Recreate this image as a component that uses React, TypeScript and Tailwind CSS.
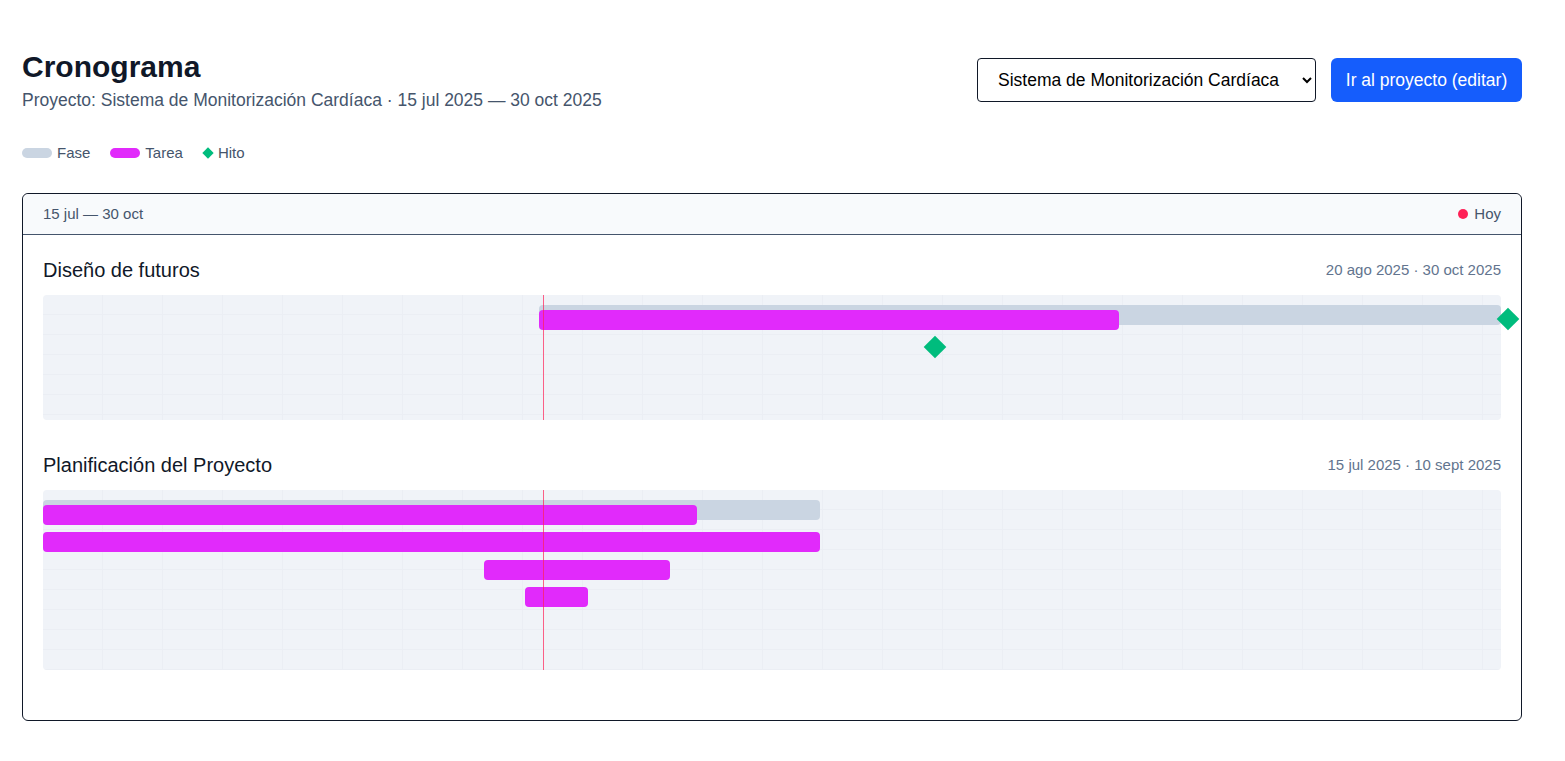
import React from "react";

type Bar = { left: number; width: number; top: number };
type Mark = { x: number; y: number };

interface Phase {
  name: string;
  range: string;
  height: number;
  phase: Bar;
  tasks: Bar[];
  milestones: Mark[];
}

// pixel positions inside a 1458px wide track (15 jul -> 30 oct)
const TODAY_X = 500;

const PHASES: Phase[] = [
  {
    name: "Diseño de futuros",
    range: "20 ago 2025 · 30 oct 2025",
    height: 125,
    phase: { left: 496, width: 962, top: 10 },
    tasks: [{ left: 496, width: 580, top: 15 }],
    milestones: [
      { x: 892, y: 52 },
      { x: 1465, y: 24 },
    ],
  },
  {
    name: "Planificación del Proyecto",
    range: "15 jul 2025 · 10 sept 2025",
    height: 180,
    phase: { left: 0, width: 777, top: 10 },
    tasks: [
      { left: 0, width: 654, top: 15 },
      { left: 0, width: 777, top: 42 },
      { left: 441, width: 186, top: 70 },
      { left: 482, width: 63, top: 97 },
    ],
    milestones: [],
  },
];

function Track({ p }: { p: Phase }) {
  return (
    <div
      className="relative rounded bg-[#f0f3f8] bg-[linear-gradient(to_left,#ebeef4_1px,transparent_1px),linear-gradient(to_top,#ebeef4_1px,transparent_1px)] bg-[size:60px_20px]"
      style={{ height: p.height }}
    >
      <div
        className="absolute h-5 rounded bg-slate-300"
        style={{ left: p.phase.left, width: p.phase.width, top: p.phase.top }}
      />
      {p.tasks.map((t, i) => (
        <div
          key={i}
          className="absolute h-5 rounded bg-fuchsia-500"
          style={{ left: t.left, width: t.width, top: t.top }}
        />
      ))}
      <div
        className="absolute top-0 bottom-0 w-px bg-rose-500/70"
        style={{ left: TODAY_X }}
      />
      {p.milestones.map((m, i) => (
        <div
          key={i}
          className="absolute h-4 w-4 rotate-45 bg-emerald-500"
          style={{ left: m.x - 8, top: m.y - 8 }}
        />
      ))}
    </div>
  );
}

export default function App() {
  return (
    <div className="min-h-screen bg-white pl-[22px] pt-[49px] font-['Liberation_Sans',Arial,sans-serif] text-gray-900">
      <div className="w-[1500px]">
        {/* header */}
        <div className="flex items-center justify-between">
          <div>
            <h1 className="text-3xl font-bold leading-9">Cronograma</h1>
            <p className="mt-0.5 text-[17.5px] leading-[26px] text-slate-600">
              Proyecto: Sistema de Monitorización Cardíaca · 15 jul 2025 — 30 oct 2025
            </p>
          </div>
          <div className="mb-0.5 flex items-center gap-[15px]">
            <select className="h-[44px] w-[339px] rounded border border-gray-900 bg-white pl-4 pr-2 text-[17.5px] text-black">
              <option>Sistema de Monitorización Cardíaca</option>
            </select>
            <button className="h-[44px] w-[191px] rounded-md bg-blue-600 text-[17.5px] text-white">
              Ir al proyecto (editar)
            </button>
          </div>
        </div>

        {/* legend */}
        <div className="mt-[30px] flex items-center text-[15px] leading-5 text-slate-600">
          <span className="mr-[5px] h-2.5 w-[30px] rounded-full bg-slate-300" />
          <span>Fase</span>
          <span className="ml-5 mr-[5px] h-2.5 w-[30px] rounded-full bg-fuchsia-500" />
          <span>Tarea</span>
          <span className="ml-[21px] mr-[6px] h-2 w-2 rotate-45 bg-emerald-500" />
          <span>Hito</span>
        </div>

        {/* timeline card */}
        <div className="mt-[30px] rounded-md border border-gray-900">
          <div className="flex items-center justify-between rounded-t-md border-b border-slate-600 bg-slate-50 px-5 py-2.5 text-[15px] leading-5 text-slate-600">
            <span>15 jul — 30 oct</span>
            <span className="flex items-center gap-1.5">
              <span className="h-2.5 w-2.5 rounded-full bg-rose-500" />
              Hoy
            </span>
          </div>
          <div className="px-5 pt-[21px] pb-[19px]">
            {PHASES.map((p) => (
              <section key={p.name} className="mb-[31px]">
                <div className="mb-[11px] flex items-center justify-between">
                  <h2 className="text-xl leading-7 text-gray-900">{p.name}</h2>
                  <span className="text-[15px] text-slate-500">{p.range}</span>
                </div>
                <Track p={p} />
              </section>
            ))}
          </div>
        </div>
      </div>
    </div>
  );
}
